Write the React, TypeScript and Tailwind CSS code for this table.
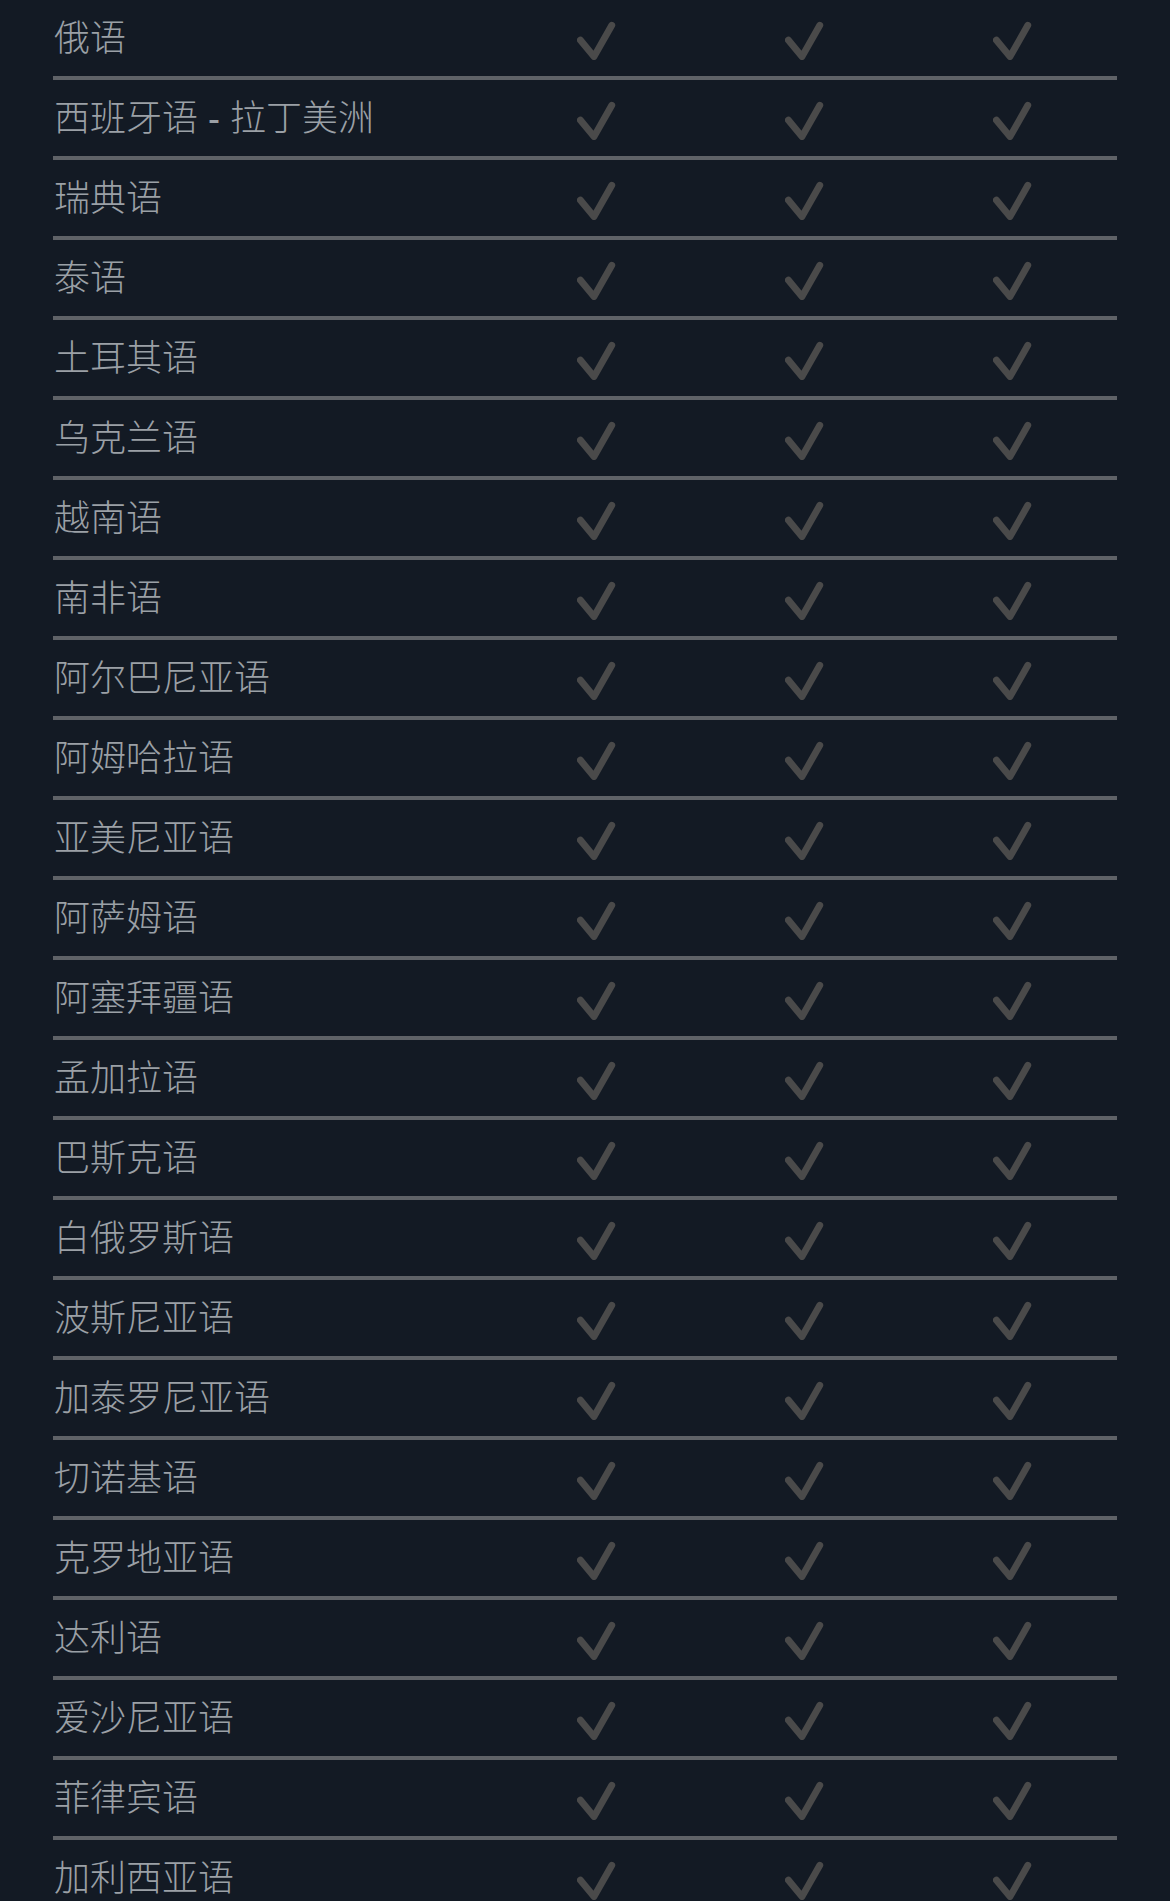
import React from "react";

const languages = [
  "俄语",
  "西班牙语 - 拉丁美洲",
  "瑞典语",
  "泰语",
  "土耳其语",
  "乌克兰语",
  "越南语",
  "南非语",
  "阿尔巴尼亚语",
  "阿姆哈拉语",
  "亚美尼亚语",
  "阿萨姆语",
  "阿塞拜疆语",
  "孟加拉语",
  "巴斯克语",
  "白俄罗斯语",
  "波斯尼亚语",
  "加泰罗尼亚语",
  "切诺基语",
  "克罗地亚语",
  "达利语",
  "爱沙尼亚语",
  "菲律宾语",
  "加利西亚语",
];

function Check() {
  return (
    <svg width="40" height="44" viewBox="0 0 40 44" fill="none">
      <path
        d="M3.3 24 L17 40.6 L34.8 9.3"
        stroke="#4a4a4a"
        strokeWidth="6.8"
        strokeLinecap="round"
        strokeLinejoin="round"
      />
    </svg>
  );
}

export default function App() {
  return (
    <div
      className="min-h-screen w-full bg-[#131a24] px-[53px]"
      style={{ fontFamily: '"Liberation Sans", "Noto Sans CJK SC", sans-serif' }}
    >
      <div className="flex flex-col">
        {languages.map((lang) => (
          <div
            key={lang}
            className="grid h-[80px] grid-cols-[440px_208px_208px_208px] items-center border-b-4 border-[#5f6267]"
          >
            <div className="pt-[1px] pl-[1px] text-[36px] font-light leading-none text-[#9ba0a6] whitespace-nowrap">
              {lang}
            </div>
            <div className="flex justify-center">
              <Check />
            </div>
            <div className="flex justify-center">
              <Check />
            </div>
            <div className="flex justify-center">
              <Check />
            </div>
          </div>
        ))}
      </div>
    </div>
  );
}
